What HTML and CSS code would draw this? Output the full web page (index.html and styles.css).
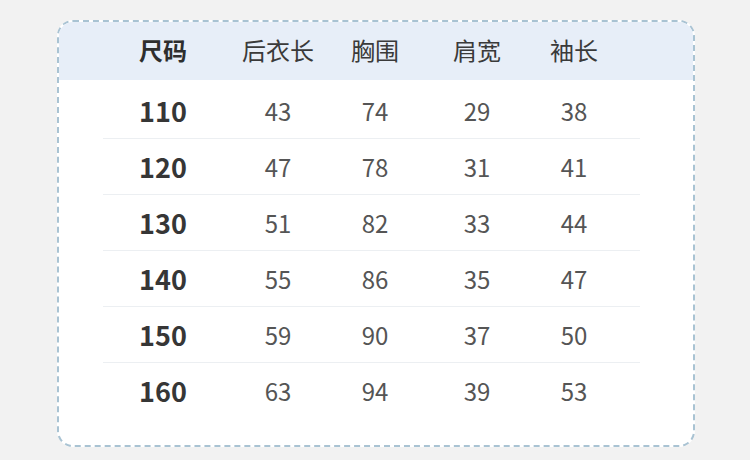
FILE: index.html
```html
<!DOCTYPE html>
<html lang="zh">
<head>
<meta charset="utf-8">
<link rel="stylesheet" href="styles.css">
</head>
<body>
<div class="card">
  <div class="head grid">
    <div class="c strong">尺码</div>
    <div class="c">后衣长</div>
    <div class="c">胸围</div>
    <div class="c">肩宽</div>
    <div class="c">袖长</div>
  </div>
  <div class="rows">
    <div class="row grid"><div class="c size">110</div><div class="c">43</div><div class="c">74</div><div class="c">29</div><div class="c">38</div></div>
    <div class="row grid"><div class="c size">120</div><div class="c">47</div><div class="c">78</div><div class="c">31</div><div class="c">41</div></div>
    <div class="row grid"><div class="c size">130</div><div class="c">51</div><div class="c">82</div><div class="c">33</div><div class="c">44</div></div>
    <div class="row grid"><div class="c size">140</div><div class="c">55</div><div class="c">86</div><div class="c">35</div><div class="c">47</div></div>
    <div class="row grid"><div class="c size">150</div><div class="c">59</div><div class="c">90</div><div class="c">37</div><div class="c">50</div></div>
    <div class="row grid last"><div class="c size">160</div><div class="c">63</div><div class="c">94</div><div class="c">39</div><div class="c">53</div></div>
  </div>
</div>
</body>
</html>
```

FILE: styles.css
```css
html, body {
  margin: 0;
  padding: 0;
}
body {
  background: #f2f2f2;
  width: 750px;
  height: 460px;
  padding: 20px 0 0 57px;
  box-sizing: border-box;
  font-family: "Noto Sans CJK SC", "Noto Sans", sans-serif;
}
.card {
  width: 638px;
  height: 427px;
  box-sizing: border-box;
  background: #ffffff;
  border: 2px dashed #a9c3d3;
  border-radius: 16px;
  overflow: hidden;
}
.grid {
  display: grid;
  grid-template-columns: 120px 110px 84px 120px 74px;
  margin-left: 44px;
  align-items: center;
}
.c {
  text-align: center;
}
.head {
  margin-left: 0;
  padding-left: 44px;
  padding-bottom: 3px;
  height: 58px;
  box-sizing: border-box;
  background: #e7eef8;
  font-size: 24px;
  font-weight: 400;
  color: #3a3a3a;
}
.strong {
  font-weight: 700;
  color: #2e2e2e;
}
.rows {
  padding-top: 3px;
}
.row {
  width: 537px;
  height: 55px;
  border-bottom: 1px solid #eceff2;
  font-size: 24px;
  font-weight: 400;
  color: #555555;
}
.row.last {
  border-bottom: none;
}
.size {
  font-size: 27px;
  font-weight: 700;
  color: #363636;
}
```
